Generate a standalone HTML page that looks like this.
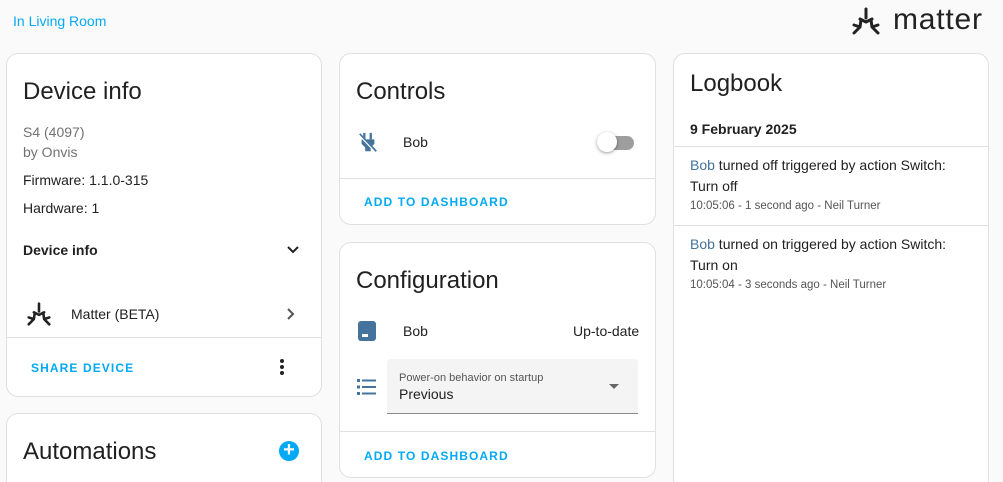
<!DOCTYPE html><html><head><style>
html,body{margin:0;width:1003px;height:482px;overflow:hidden}
body{background:#fafafa;font-family:"Liberation Sans",sans-serif;color:#212121;position:relative}
.card{position:absolute;background:#fff;border:1px solid #e0e0e0;border-radius:12px;box-sizing:border-box;overflow:hidden}
.t{position:absolute;white-space:nowrap}
.h{font-size:24px;color:#212121}
.btn{color:#03a9f4;font-size:12px;font-weight:bold;letter-spacing:1.1px}
.hr{position:absolute;left:0;right:0;height:1px;background:#e0e0e0}
.s{font-size:14px}
</style></head><body>
<div class="t" style="left:13px;top:13px;font-size:14px;color:#03a9f4">In Living Room</div>
<svg style="position:absolute;left:851px;top:7px" width="30" height="28" viewBox="0 0 30 28"><g stroke="#222" stroke-width="3" fill="none" stroke-linecap="round" stroke-linejoin="round"><path d="M15 2V11M9 12l6 3 6-3"/><path d="M3 26l6-6 1-7M3 18l6 2"/><path d="M27 26l-6-6-1-7M27 18l-6 2"/></g></svg>
<div class="t" style="left:893px;top:3px;font-size:30px;color:#222;letter-spacing:0.8px">matter</div>

<div class="card" style="left:6px;top:53px;width:316px;height:344px">
<div class="t h" style="left:16px;top:24px">Device info</div>
<div class="t s" style="left:16px;top:70px;color:#727272">S4 (4097)</div>
<div class="t s" style="left:16px;top:90px;color:#727272">by Onvis</div>
<div class="t s" style="left:16px;top:118px">Firmware: 1.1.0-315</div>
<div class="t s" style="left:16px;top:146px">Hardware: 1</div>
<div class="t s" style="left:16px;top:188px;font-weight:bold">Device info</div>
<svg style="position:absolute;left:278px;top:188px" width="16" height="16" viewBox="0 0 16 16"><path d="M3 5l5 5 5-5" stroke="#222" stroke-width="2" fill="none"/></svg>
<svg style="position:absolute;left:19px;top:248px" width="26" height="24" viewBox="0 0 30 28"><g stroke="#222" stroke-width="3" fill="none" stroke-linecap="round" stroke-linejoin="round"><path d="M15 2V11M9 12l6 3 6-3"/><path d="M3 26l6-6 1-7M3 18l6 2"/><path d="M27 26l-6-6-1-7M27 18l-6 2"/></g></svg>
<div class="t s" style="left:64px;top:252px">Matter (BETA)</div>
<svg style="position:absolute;left:276px;top:252px" width="14" height="16" viewBox="0 0 14 16"><path d="M5 3l5 5-5 5" stroke="#555" stroke-width="2" fill="none"/></svg>
<div class="hr" style="top:283px"></div>
<div class="t btn" style="left:24px;top:307px">SHARE DEVICE</div>
<div style="position:absolute;left:273px;top:305px;width:4px;height:4px;border-radius:2px;background:#222;box-shadow:0 6px 0 #222,0 12px 0 #222"></div>
</div>
<div class="card" style="left:6px;top:413px;width:316px;height:80px">
<div class="t h" style="left:16px;top:24px">Automations</div>
<div style="position:absolute;left:272px;top:27px;width:20px;height:20px;border-radius:10px;background:#03a9f4;color:#fff;font-size:20px;line-height:19px;text-align:center;font-weight:bold">+</div>
</div>

<div class="card" style="left:339px;top:53px;width:317px;height:172px">
<div class="t h" style="left:16px;top:24px">Controls</div>
<svg style="position:absolute;left:17px;top:78px" width="22" height="22" viewBox="0 0 24 24"><path d="M8 2v5M14 2v5M5 8h14v5l-4 4v4H9v-4l-4-4z" fill="#44739e"/><path d="M8 1v7M15 1v7" stroke="#44739e" stroke-width="2.5"/><path d="M3 3l18 19" stroke="#fff" stroke-width="3"/><path d="M3 2l18 19" stroke="#44739e" stroke-width="1.8"/></svg>
<div class="t s" style="left:63px;top:80px">Bob</div>
<div style="position:absolute;left:260px;top:82px;width:34px;height:14px;border-radius:7px;background:#9e9e9e"></div>
<div style="position:absolute;left:257px;top:78px;width:20px;height:20px;border-radius:10px;background:#fff;box-shadow:0 1px 3px rgba(0,0,0,.4)"></div>
<div class="hr" style="top:124px"></div>
<div class="t btn" style="left:24px;top:141px">ADD TO DASHBOARD</div>
</div>

<div class="card" style="left:339px;top:242px;width:317px;height:236px">
<div class="t h" style="left:16px;top:24px">Configuration</div>
<svg style="position:absolute;left:17px;top:77px" width="20" height="22" viewBox="0 0 20 22"><rect x="1" y="1" width="18" height="20" rx="3" fill="#44739e"/><rect x="5" y="14" width="6" height="3" fill="#fff"/></svg>
<div class="t s" style="left:63px;top:80px">Bob</div>
<div class="t s" style="left:233px;top:80px">Up-to-date</div>
<svg style="position:absolute;left:17px;top:135px" width="20" height="18" viewBox="0 0 20 18"><g fill="#44739e"><rect x="0" y="1" width="3" height="3"/><rect x="0" y="7.5" width="3" height="3"/><rect x="0" y="14" width="3" height="3"/><rect x="5" y="1.5" width="14" height="2"/><rect x="5" y="8" width="14" height="2"/><rect x="5" y="14.5" width="14" height="2"/></g></svg>
<div style="position:absolute;left:47px;top:116px;width:251px;height:55px;background:#f4f4f4;border-radius:4px 4px 0 0;border-bottom:1px solid #8a8a8a;box-sizing:border-box"></div>
<div class="t" style="left:59px;top:129px;font-size:11px;color:#555">Power-on behavior on startup</div>
<div class="t s" style="left:59px;top:143px">Previous</div>
<div style="position:absolute;left:269px;top:141px;border:5px solid transparent;border-top:5px solid #666"></div>
<div class="hr" style="top:188px"></div>
<div class="t btn" style="left:24px;top:206px">ADD TO DASHBOARD</div>
</div>

<div class="card" style="left:673px;top:53px;width:316px;height:440px">
<div class="t h" style="left:16px;top:16px">Logbook</div>
<div class="t s" style="left:16px;top:67px;font-weight:bold">9 February 2025</div>
<div class="hr" style="top:92px"></div>
<div class="t s" style="left:16px;top:101px;line-height:21px;white-space:normal;width:270px"><span style="color:#44739e">Bob</span> turned off triggered by action Switch: Turn off</div>
<div class="t" style="left:16px;top:146px;font-size:11.5px;color:#555">10:05:06 - 1 second ago - Neil Turner</div>
<div class="hr" style="top:171px"></div>
<div class="t s" style="left:16px;top:180px;line-height:21px;white-space:normal;width:270px"><span style="color:#44739e">Bob</span> turned on triggered by action Switch: Turn on</div>
<div class="t" style="left:16px;top:225px;font-size:11.5px;color:#555">10:05:04 - 3 seconds ago - Neil Turner</div>
</div>
</body></html>
